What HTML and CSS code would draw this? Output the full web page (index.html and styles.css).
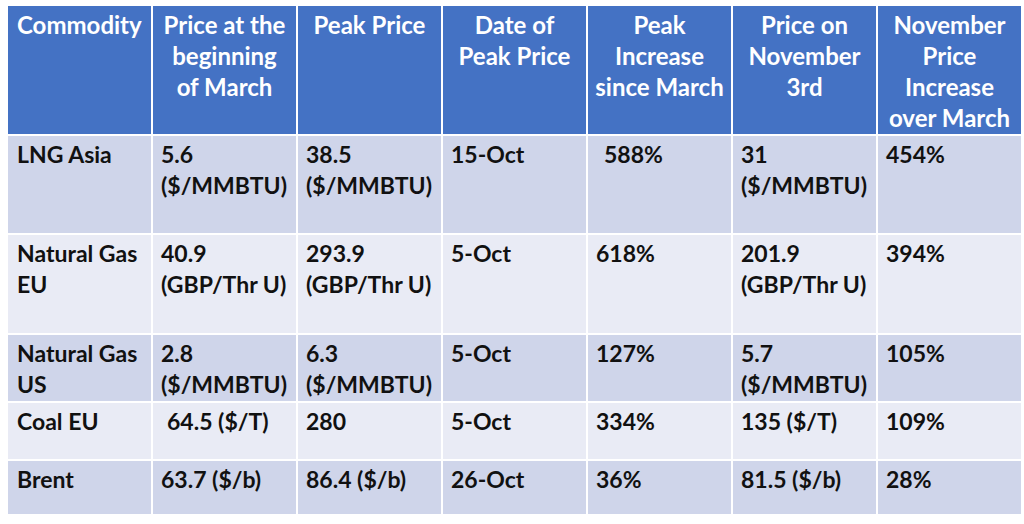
FILE: index.html
```html
<!DOCTYPE html>
<html lang="en">
<head>
<meta charset="utf-8">
<title>Commodity Prices</title>
<link rel="stylesheet" href="styles.css">
</head>
<body>
<table class="prices">
  <colgroup>
    <col class="c-first">
    <col class="c">
    <col class="c">
    <col class="c">
    <col class="c">
    <col class="c">
    <col class="c">
  </colgroup>
  <thead>
    <tr class="head">
      <th>Commodity</th>
      <th>Price at the<br>beginning<br>of March</th>
      <th>Peak Price</th>
      <th>Date of<br>Peak Price</th>
      <th>Peak<br>Increase<br>since March</th>
      <th>Price on<br>November<br>3rd</th>
      <th>November<br>Price<br>Increase<br>over March</th>
    </tr>
  </thead>
  <tbody>
    <tr class="dark r1">
      <td>LNG Asia</td>
      <td>5.6<br>($/MMBTU)</td>
      <td>38.5<br>($/MMBTU)</td>
      <td>15-Oct</td>
      <td class="indent">588%</td>
      <td>31<br>($/MMBTU)</td>
      <td>454%</td>
    </tr>
    <tr class="light r2">
      <td>Natural Gas<br>EU</td>
      <td>40.9<br>(GBP/Thr U)</td>
      <td>293.9<br>(GBP/Thr U)</td>
      <td>5-Oct</td>
      <td>618%</td>
      <td>201.9<br>(GBP/Thr U)</td>
      <td>394%</td>
    </tr>
    <tr class="dark r3">
      <td>Natural Gas<br>US</td>
      <td>2.8<br>($/MMBTU)</td>
      <td>6.3<br>($/MMBTU)</td>
      <td>5-Oct</td>
      <td>127%</td>
      <td>5.7<br>($/MMBTU)</td>
      <td>105%</td>
    </tr>
    <tr class="light r4">
      <td>Coal EU</td>
      <td class="indent-s">64.5 ($/T)</td>
      <td>280</td>
      <td>5-Oct</td>
      <td>334%</td>
      <td>135 ($/T)</td>
      <td>109%</td>
    </tr>
    <tr class="dark r5">
      <td>Brent</td>
      <td>63.7 ($/b)</td>
      <td>86.4 ($/b)</td>
      <td>26-Oct</td>
      <td>36%</td>
      <td>81.5 ($/b)</td>
      <td>28%</td>
    </tr>
  </tbody>
</table>
</body>
</html>
```
FILE: styles.css
```css
html, body {
  margin: 0;
  background: #ffffff;
}
body {
  padding: 4px 0 0 6px;
  font-family: Lato, "Open Sans", sans-serif;
  font-weight: 700;
}
.prices {
  border-collapse: collapse;
  table-layout: fixed;
  width: 1013px;
}
.c-first { width: 145px; }
.c { width: 145px; }
.prices th,
.prices td {
  border: 2px solid #ffffff;
  vertical-align: top;
  line-height: 31px;
  overflow: hidden;
  white-space: nowrap;
}
.prices th {
  background: #4472c4;
  color: #ffffff;
  text-align: center;
  font-size: 24px;
  padding: 3px 2px 0;
}
.prices th:first-child {
  text-align: left;
  padding-left: 9px;
}
.prices td {
  color: #111111;
  text-align: left;
  font-size: 23px;
  padding: 3px 2px 0 8px;
}
.prices td:first-child { padding-left: 9px; }
.head { height: 130px; }
.dark td { background: #cfd5ea; }
.light td { background: #e9ebf5; }
.r1 { height: 99px; }
.r2 { height: 100px; }
.r3 { height: 68px; }
.r4 { height: 58px; }
.r5 { height: 55px; }
.indent { padding-left: 16px !important; }
.indent-s { padding-left: 14px !important; }
```
